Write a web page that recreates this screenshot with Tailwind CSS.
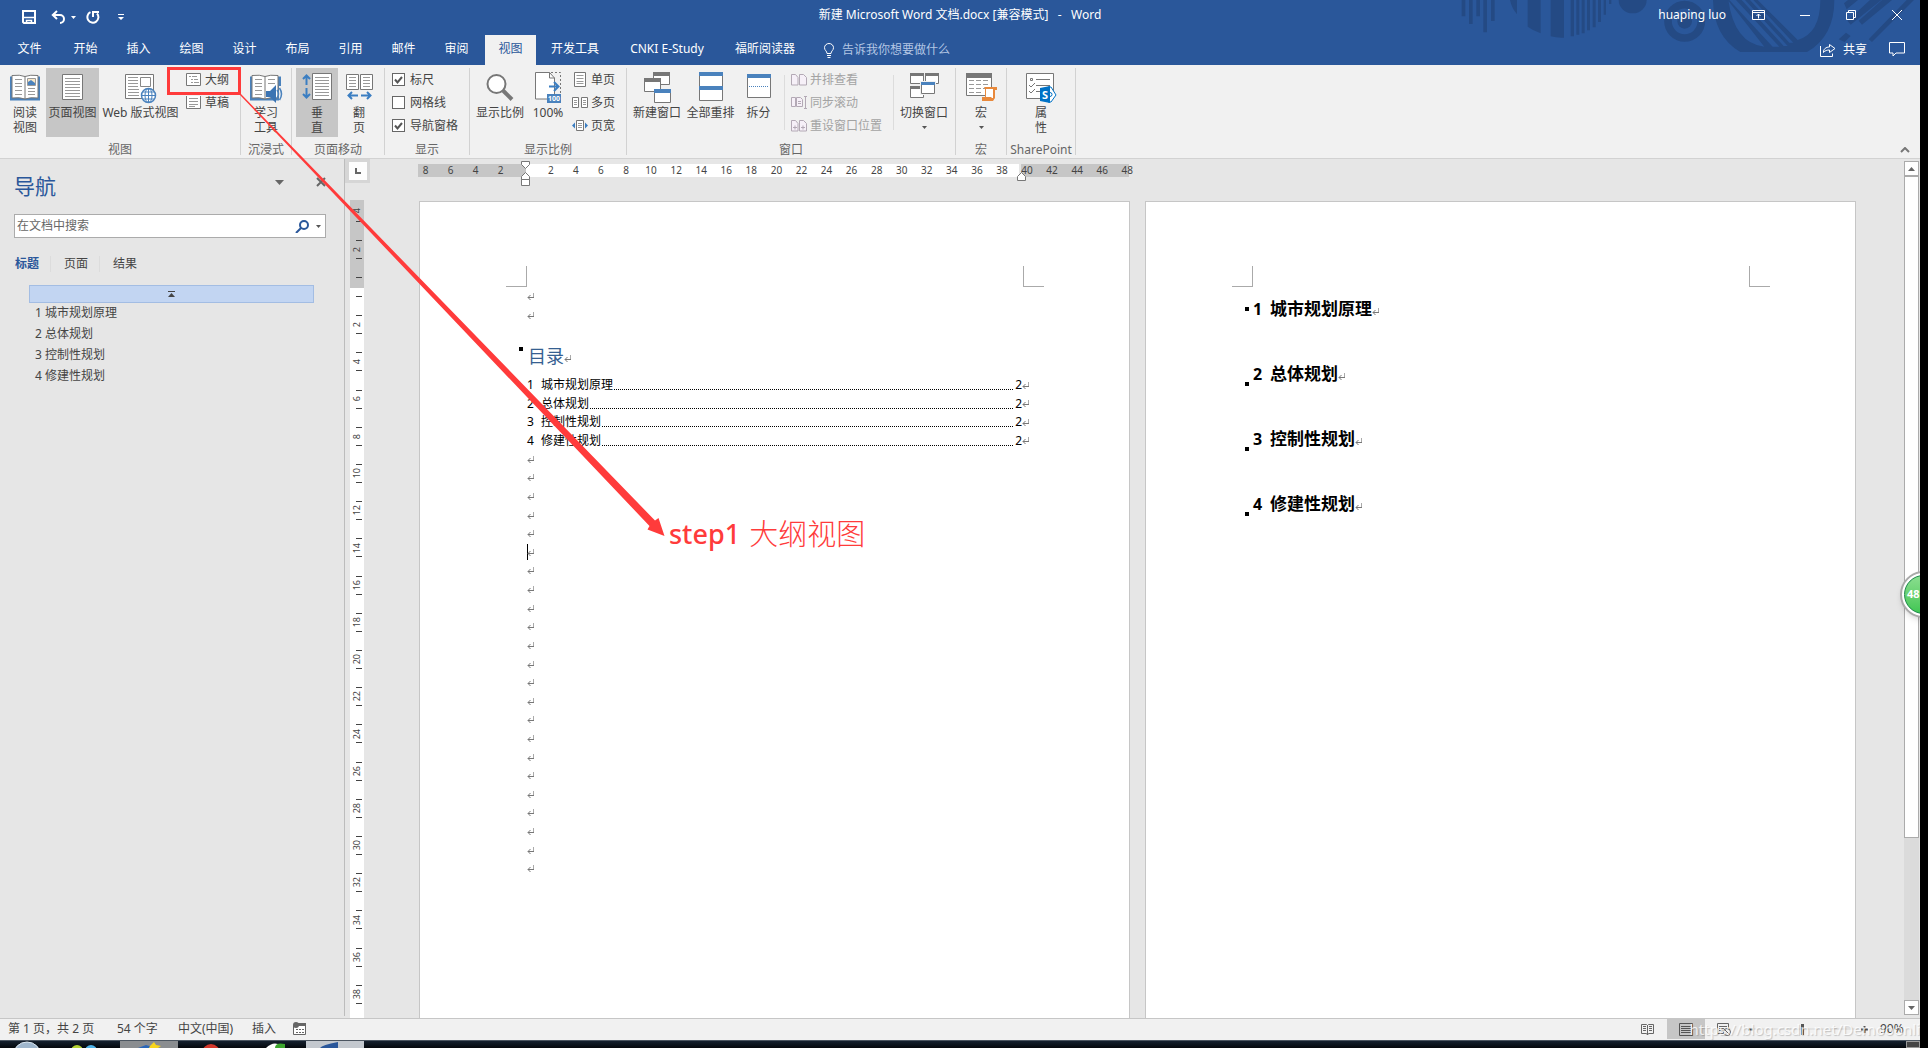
<!DOCTYPE html>
<html lang="zh-CN">
<head>
<meta charset="utf-8">
<title>新建 Microsoft Word 文档.docx - Word</title>
<script src="https://cdn.jsdelivr.net/npm/@tailwindcss/browser@4"></script>
</head>
<body class="bg-black pr-2 font-['Noto_Sans','Noto_Sans_CJK_SC',sans-serif] text-xs leading-4 text-[#444]">
<div class="relative flex h-screen flex-col overflow-hidden bg-[#e6e6e6]">

  <!-- Title bar and ribbon tabs -->
  <header class="relative h-[65px] shrink-0 overflow-hidden bg-[#2a579a] text-white">
    <svg class="absolute top-0 right-0" width="480" height="65" viewBox="0 0 1440 195" fill="#244a84">
      <path d="M65 0h11v49H65zM87 0h11v72H87zM109 0h11v49h-11zM130 0h11v97h-11zM153 0h11v63h-11zM210 0h21v43Q215 24 210 0zM263 0h39v100Q280 92 263 80zM332 0h40v113q-22 1-40-4zM392 0h10v109h-10zM409 0h9v104h-9zM425 0h9v100h-9zM441 0h9v91h-9zM458 0h9v82h-9zM474 0h9v66h-9zM491 0h7v44h-7zM507 0h7v12h-7z"/>
      <path d="M536 0h84a42 40 0 0 1-84 0z"/>
      <circle cx="734" cy="64" r="50" fill="none" stroke="#244a84" stroke-width="23"/><circle cx="734" cy="64" r="22"/>
      <path d="M819 0q2 110 82 156h200q82-46 82-156h-42q0 100-68 120L953 0h-90l110 140q-90-10-108-140z"/>
      <path d="M868 0h20l130 140h-20zM905 0h10l128 138h-12zM930 0h10l120 128h-12z" fill="#2a579a"/>
      <path d="M1212 10l12-10h30l-34 28zM1222 62L1290 0h34l-92 74zM1256 62l70-62h30l-90 74zM1286 118L1400 0h22l-126 126zM1196 118l22-20 14 10-18 18z"/>
    </svg>
    <div class="relative grid h-[30px] grid-cols-[1fr_auto_1fr] items-center">
      <div class="flex items-center pl-[22px] pt-1">
        <button aria-label="保存"><svg width="14" height="14" viewBox="0 0 14 14" fill="none" stroke="#fff" stroke-width="2"><path d="M1 1h12v12H2L1 12z"/><path d="M1 7.500h12M4.500 14v-3.500h5V14" stroke-width="1.500"/></svg></button>
        <button aria-label="撤消" class="ml-[15px]"><svg width="15" height="14" viewBox="0 0 15 14" fill="none" stroke="#fff" stroke-width="2"><path d="M1.500 5H9a4 4 0 0 1 0 8M6 1L1.800 5 6 9"/></svg></button>
        <button aria-label="撤消列表" class="ml-[5px]"><svg width="5" height="3" fill="#fff"><path d="M0 0h5L2.500 3z"/></svg></button>
        <button aria-label="重复" class="ml-[10px]"><svg width="14" height="14" viewBox="0 0 14 14" fill="none" stroke="#fff" stroke-width="2"><path d="M4.500 2.200A5.500 5.500 0 1 0 11 3.500M7 7V2h6"/></svg></button>
        <button aria-label="自定义快速访问工具栏" class="ml-[18px]"><svg width="6" height="6" fill="#fff"><path d="M0 0h6v1H0zM0 3h6L3 6z"/></svg></button>
      </div>
      <h1 class="whitespace-pre">新建 Microsoft Word 文档.docx [兼容模式]   -   Word</h1>
      <div class="flex items-center justify-end pr-[18px]">
        <a href="#" class="mr-[26px]">huaping luo</a>
        <button aria-label="功能区显示选项"><svg width="13" height="10" fill="none" stroke="#fff"><path d="M.5.5h12v9H.5zM.5 2.500h12M6.500 8.500V4M4.500 6l2-2 2 2"/></svg></button>
        <button aria-label="最小化" class="ml-[35px]"><svg width="10" height="10"><path d="M0 5.500h10" stroke="#fff"/></svg></button>
        <button aria-label="还原" class="ml-9"><svg width="10" height="10" fill="none" stroke="#fff"><path d="M.5 2.500h7v7h-7zM2.500 2.500v-2h7v7h-2"/></svg></button>
        <button aria-label="关闭" class="ml-9"><svg width="10" height="10" stroke="#fff"><path d="M0 0l10 10M10 0L0 10"/></svg></button>
      </div>
    </div>
    <nav class="relative flex h-[35px] items-end">
      <button class="h-[30px] w-[59px] pb-0.5">文件</button>
      <button class="h-[30px] w-[53px] pb-0.5">开始</button>
      <button class="h-[30px] w-[53px] pb-0.5">插入</button>
      <button class="h-[30px] w-[53px] pb-0.5">绘图</button>
      <button class="h-[30px] w-[53px] pb-0.5">设计</button>
      <button class="h-[30px] w-[53px] pb-0.5">布局</button>
      <button class="h-[30px] w-[53px] pb-0.5">引用</button>
      <button class="h-[30px] w-[53px] pb-0.5">邮件</button>
      <button class="h-[30px] w-[53px] pb-0.5">审阅</button>
      <button class="ml-0.5 h-[30px] w-[51px] bg-[#f1f1f1] pb-0.5 text-[#2a579a]">视图</button>
      <button class="h-[30px] w-[78px] pb-0.5">开发工具</button>
      <button class="h-[30px] w-[106px] pb-0.5">CNKI E-Study</button>
      <button class="h-[30px] w-[90px] pb-0.5">福昕阅读器</button>
      <button class="ml-[14px] flex h-[30px] items-center gap-2 text-[#b3c6e4]"><svg width="10" height="15" fill="none" stroke="#fff"><path d="M3 10.500C3 8 .5 7.500.5 4.700a4.500 4.200 0 0 1 9 0C9.500 7.500 7 8 7 10.500zM3 12.500h4M3.500 14.500h3"/></svg>告诉我你想要做什么</button>
      <div class="ml-auto flex h-[30px] items-center pr-[15px] pb-px">
        <button class="flex items-center gap-[7px]"><svg width="16" height="14" fill="none" stroke="#fff"><path d="M.5 3v10.500h12v-3M3.500 9c0-3 2.500-5 6-5V1.500L15 5.500 9.500 9.500V7C7 7 5 7.500 3.500 9.500z"/></svg>共享</button>
        <button aria-label="批注" class="ml-[22px]"><svg width="16" height="15" fill="none" stroke="#fff"><path d="M.5.5h15v10.500H7l-3 3V11H.5z"/></svg></button>
      </div>
    </nav>
  </header>

  <!-- Ribbon -->
  <section class="flex h-[94px] shrink-0 border-b border-[#d2d2d2] bg-[#f1f1f1] pt-[3px] text-center" aria-label="视图">
    <div class="mb-[3px] flex w-[241px] flex-col border-r border-[#d2d2d2]">
      <div class="flex h-[69px]">
        <button class="flex w-[46px] flex-col items-center pt-1.5 pl-1 leading-[15px]">
          <svg class="mb-1" width="32" height="27" viewBox="0 0 32 27"><path d="M1 2.500h30v24H1z" fill="#4a82bd"/><path d="M3 1.500q8-1 13 1 5-2 13-1v22.500q-8-1-13 1-5-2-13-1z" fill="#fff" stroke="#777"/><path d="M16 2.500V25" stroke="#777"/><path d="M6 5.500h7M6 9.500h7M6 12.500h7M6 16.500h7M6 20.500h7M19 14.500h7M19 17.500h7M19 20.500h7" stroke="#999"/><path d="M18.500 4.500h8v7h-8z" fill="#f8e7c8" stroke="#999"/><path d="M19 11V8l3-2 4 3v2z" fill="#4a82bd"/></svg>阅读<br>视图</button>
        <button class="flex w-[53px] flex-col items-center bg-[#c6c6c6] pt-1.5 leading-[15px]">
          <svg class="mb-1" width="21" height="27" viewBox="0 0 21 27"><path d="M.5.5h20v25H.5z" fill="#fff" stroke="#777"/><path d="M3 4.500h15M3 7.500h15M3 10.500h15M3 13.500h15M3 16.500h15M3 19.500h15M3 22.500h15" stroke="#999"/></svg>页面视图</button>
        <button class="flex w-[83px] flex-col items-center pt-1.5 leading-[15px] whitespace-nowrap">
          <svg class="mb-1" width="31" height="27" viewBox="0 0 31 27" overflow="visible"><path d="M.5.500h28v24H.5z" fill="#fff" stroke="#777"/><path d="M3 3.500h10M3 6.500h10M3 9.500h10M3 12.500h10M3 15.500h11M3 18.500h11M3 21.500h11" stroke="#999"/><path d="M15.500 3.500h10v9h-10z" fill="#fff" stroke="#888"/><circle cx="23.500" cy="21.500" r="7" fill="#fff" stroke="#4a82bd" stroke-width="1.500"/><path d="M16.500 21.500h14M23.500 14.500v14M18 18h11M18 25h11" stroke="#4a82bd"/><ellipse cx="23.500" cy="21.500" rx="3.500" ry="7" fill="none" stroke="#4a82bd"/></svg>Web 版式视图</button>
        <div class="flex flex-col pl-1">
          <button class="flex h-[23px] items-center gap-1"><svg width="15" height="13" fill="none"><path d="M.5.5h14v12H.5z" fill="#fff" stroke="#777"/><path d="M3 3.500h2M6 3.500h5M5 6.500h2M8 6.500h4M5 9.500h2M8 9.500h5" stroke="#999"/></svg>大纲</button>
          <button class="flex h-[23px] items-center gap-1"><svg width="15" height="13" fill="none"><path d="M.5 0v12.500h14V0" fill="#fff" stroke="#777"/><path d="M3 2.500h9M3 5.500h9M3 8.500h9M3 10.500h6" stroke="#999"/></svg>草稿</button>
        </div>
      </div>
      <p class="-mb-1 pt-[5px] text-[#666]">视图</p>
    </div>
    <div class="mb-[3px] flex w-[51px] flex-col border-r border-[#d2d2d2]">
      <button class="flex h-[69px] flex-col items-center pt-1.5 leading-[15px]">
        <svg class="mb-1" width="32" height="27" viewBox="0 0 32 27" overflow="visible"><path d="M0 2.500h31v24H0z" fill="#4a82bd"/><path d="M2 1.500q8-1 13 1 5-2 13-1v22.500q-8-1-13 1-5-2-13-1z" fill="#fff" stroke="#777"/><path d="M15 2.500V25" stroke="#777"/><path d="M5 5.500h7M5 9.500h7M5 12.500h7M5 16.500h7M5 20.500h7M18 5.500h7M18 9.500h7" stroke="#999"/><path d="M29 12h3v16h-3z" fill="#f1f1f1"/><path d="M16 17h4l6-6v18l-6-6h-4z" fill="#3b74b3"/><path d="M27 16q3 4 0 8M29.500 14q4 6 0 12" fill="none" stroke="#4a82bd" stroke-width="1.500"/></svg>学习<br>工具</button>
      <p class="-mb-1 pt-[5px] text-[#666]">沉浸式</p>
    </div>
    <div class="mb-[3px] flex w-[93px] flex-col border-r border-[#d2d2d2]">
      <div class="flex h-[69px] pl-1">
        <button class="flex w-[42px] flex-col items-center bg-[#c6c6c6] pt-[5px] leading-[15px]">
          <svg class="mb-1" width="30" height="28" viewBox="0 0 30 28"><path d="M10.500.5h19v26h-19z" fill="#fff" stroke="#777"/><path d="M13 4.500h14M13 7.500h14M13 10.500h14M13 13.500h14M13 16.500h14M13 19.500h14M13 22.500h14" stroke="#999"/><path d="M4.500 2.500V12M1 6l3.500-3.500L8 6M4.500 15v9.500M1 21l3.500 3.500L8 21" fill="none" stroke="#3b7ec2" stroke-width="2"/></svg>垂<br>直</button>
        <button class="flex w-[42px] flex-col items-center pt-[5px] leading-[15px]">
          <svg class="mb-1" width="27" height="28" viewBox="0 0 27 28"><path d="M.5 1.500h12v15H.5zM14.500 1.500h12v15h-12z" fill="#fff" stroke="#777"/><path d="M3 4.500h7M3 7.500h7M3 10.500h7M3 13.500h7M17 4.500h7M17 7.500h7M17 10.500h7M17 13.500h7" stroke="#999"/><path d="M2.500 22.500H12M6 19l-3.500 3.500L6 26M15 22.500h9.500M21 19l3.500 3.500L21 26" fill="none" stroke="#3b7ec2" stroke-width="2"/></svg>翻<br>页</button>
      </div>
      <p class="-mb-1 pt-[5px] text-[#666]">页面移动</p>
    </div>
    <div class="mb-[3px] flex w-[85px] flex-col border-r border-[#d2d2d2]">
      <div class="flex h-[69px] flex-col pl-[7px]">
        <label class="flex h-[23px] items-center gap-[5px]"><span class="grid"><input type="checkbox" checked class="col-start-1 row-start-1 size-[13px] appearance-none border border-[#666] bg-white"><svg class="col-start-1 row-start-1" width="13" height="13" fill="none" stroke="#555" stroke-width="2"><path d="M3 6.500l2.500 3L10 4"/></svg></span>标尺</label>
        <label class="flex h-[23px] items-center gap-[5px]"><input type="checkbox" class="size-[13px] appearance-none border border-[#666] bg-white">网格线</label>
        <label class="flex h-[23px] items-center gap-[5px]"><span class="grid"><input type="checkbox" checked class="col-start-1 row-start-1 size-[13px] appearance-none border border-[#666] bg-white"><svg class="col-start-1 row-start-1" width="13" height="13" fill="none" stroke="#555" stroke-width="2"><path d="M3 6.500l2.500 3L10 4"/></svg></span>导航窗格</label>
      </div>
      <p class="-mb-1 pt-[5px] text-[#666]">显示</p>
    </div>
    <div class="mb-[3px] flex w-[157px] flex-col border-r border-[#d2d2d2]">
      <div class="flex h-[69px] pl-[5px]">
        <button class="flex w-[50px] flex-col items-center pt-1.5 leading-[15px]">
          <svg class="mb-1" width="28" height="27" viewBox="0 0 28 27"><circle cx="10.500" cy="10" r="9" fill="#fff" stroke="#777" stroke-width="2"/><path d="M17 16.500l9 9" stroke="#777" stroke-width="4"/></svg>显示比例</button>
        <button class="flex w-[46px] flex-col items-center pt-1.5 leading-[15px]">
          <svg class="mb-1" width="27" height="27" viewBox="0 0 27 27" overflow="visible"><path d="M.5-1.500h14l5 5.500v21H.5z" fill="#fff" stroke="#777"/><path d="M14.500-1.500V4h5" fill="none" stroke="#777"/><path d="M16-1.500h9.500V19" fill="none" stroke="#777" stroke-dasharray="2 2"/><path d="M14 12.500h9M19 8l4.500 4.500L19 17" fill="none" stroke="#3b7ec2" stroke-width="2"/><path d="M12 20h14v9H12z" fill="#4a82bd"/><text x="13" y="27" font-size="7" font-weight="700" fill="#fff">100</text></svg>100%</button>
        <div class="flex flex-col pl-px">
          <button class="flex h-[23px] items-center gap-[3px]"><svg class="mx-0.5" width="12" height="15"><path d="M.5.5h11v14H.5z" fill="#fff" stroke="#777"/><path d="M2.500 3.500h7M2.500 6.500h7M2.500 9.500h7M2.500 11.500h7" stroke="#999"/></svg>单页</button>
          <button class="flex h-[23px] items-center gap-[3px]"><svg width="16" height="11"><path d="M.5.5h6v10h-6zM9.500.5h6v10h-6z" fill="#fff" stroke="#777"/><path d="M2 3.500h3M2 5.500h3M2 7.500h3M11 3.500h3M11 5.500h3M11 7.500h3" stroke="#999"/></svg>多页</button>
          <button class="flex h-[23px] items-center gap-[3px]"><svg width="16" height="11"><path d="M4.500.5h7v10h-7z" fill="#fff" stroke="#777"/><path d="M6 3.500h4M6 5.500h4M6 7.500h4" stroke="#999"/><path d="M3 2.500v6L0 5.500zM13 2.500v6l3-3z" fill="#3b7ec2"/></svg>页宽</button>
        </div>
      </div>
      <p class="-mb-1 pt-[5px] text-[#666]">显示比例</p>
    </div>
    <div class="mb-[3px] flex w-[329px] flex-col border-r border-[#d2d2d2]">
      <div class="flex h-[69px] pl-[3px]">
        <button class="flex w-[54px] flex-col items-center pt-1.5 leading-[15px]">
          <svg class="mb-1" width="28" height="27" viewBox="0 0 28 27" overflow="visible"><path d="M10.500-.5h16v11h-16z" fill="#fff" stroke="#777"/><path d="M10-2h17v4H10z" fill="#777"/><path d="M1.500 5.500h16v12h-16z" fill="#fff" stroke="#777"/><path d="M1 4h17v4H1z" fill="#777"/><path d="M11.500 17.500h16v11h-16z" fill="#fff" stroke="#777"/><path d="M11 15h17v4H11z" fill="#4a82bd"/></svg>新建窗口</button>
        <button class="flex w-[53px] flex-col items-center pt-1.5 leading-[15px]">
          <svg class="mb-1" width="24" height="27" viewBox="0 0 24 27" overflow="visible"><path d="M.5-.5h23v27H.5z" fill="#fff" stroke="#777"/><path d="M0-2h24v4H0zM0 12h24v4H0z" fill="#4a82bd"/></svg>全部重排</button>
        <button class="flex w-[43px] flex-col items-center pt-1.5 leading-[15px]">
          <svg class="mb-1" width="24" height="27" viewBox="0 0 24 27"><path d="M.5.500h23v23H.5z" fill="#fff" stroke="#777"/><path d="M0 0h24v4H0z" fill="#4a82bd"/><path d="M2 12.500h20" stroke="#4a82bd" stroke-dasharray="1 1"/></svg>拆分</button>
        <div class="my-[7px] ml-1 w-px bg-[#dcdcdc]"></div>
        <div class="flex flex-col pl-[6px] text-[#a3a3a3]">
          <button disabled class="flex h-[23px] items-center gap-[3px]"><svg width="16" height="12" fill="#f6f0f8" stroke="#b3a9b5"><path d="M.5.5h4l2.500 3v7.500H.5zM8.500.5h4l3 3v7.500h-7z"/></svg>并排查看</button>
          <button disabled class="flex h-[23px] items-center gap-[3px]"><svg width="16" height="15" fill="#f6f0f8" stroke="#b3a9b5"><path d="M.5 2.500h4v9h-4zM5.500 2.500h4l2 2v7h-6zM14.500 1v13M13 1.500h3M13 13.500h3M7 6.500h3M7 8.500h3"/></svg>同步滚动</button>
          <button disabled class="flex h-[23px] items-center gap-[3px]"><svg width="16" height="12" fill="#f6f0f8" stroke="#b3a9b5"><path d="M.5.5h4l2.500 3v7.500H.5zM8.500.5h4l3 3v7.500h-7zM2 7.500h4M4 5.500v4M10 7.500h4M12 5.500v4"/></svg>重设窗口位置</button>
        </div>
        <div class="my-[7px] ml-[11px] w-px bg-[#dcdcdc]"></div>
        <button class="ml-[3px] flex w-[54px] flex-col items-center pt-1.5 leading-[15px]">
          <svg class="mb-1" width="29" height="27" viewBox="0 0 29 27" overflow="visible"><path d="M.5-.5h13v10H.5zM15.500-.5h13v10h-13zM.5 12.500h13v11H.5z" fill="#fff" stroke="#777"/><path d="M0-1h14v3H0zM15-1h14v3H15zM0 12h14v3H0z" fill="#777"/><path d="M10 7h16v14H10z" fill="#f1f1f1"/><path d="M11.500 8.500h13v11h-13z" fill="#fff" stroke="#777"/><path d="M11 8h14v3H11z" fill="#4a82bd"/></svg>切换窗口
          <svg class="mt-1.5" width="5" height="3" fill="#555"><path d="M0 0h5L2.500 3z"/></svg></button>
      </div>
      <p class="-mb-1 pt-[5px] text-[#666]">窗口</p>
    </div>
    <div class="mb-[3px] flex w-[51px] flex-col border-r border-[#d2d2d2]">
      <button class="flex h-[69px] flex-col items-center pt-1.5 leading-[15px]">
        <svg class="mb-1" width="31" height="27" viewBox="0 0 31 27" overflow="visible"><path d="M.5-.5h25v22H.5z" fill="#fff" stroke="#777"/><path d="M0-1h26v5H0z" fill="#777"/><path d="M3 6.500h20M3 10.500h20M3 14.500h20M3 18.500h14" stroke="#999" stroke-dasharray="5 2"/><path d="M18 13h13v3h-2v8l-2 3H16v-4h3V15z" fill="#e8893c"/><path d="M20 15h7v9h-1l-1-1h-5z" fill="#fff"/></svg>宏
        <svg class="mt-1.5" width="5" height="3" fill="#555"><path d="M0 0h5L2.500 3z"/></svg></button>
      <p class="-mb-1 pt-[5px] text-[#666]">宏</p>
    </div>
    <div class="mb-[3px] flex w-[69px] flex-col border-r border-[#d2d2d2]">
      <button class="flex h-[69px] flex-col items-center pt-1.5 leading-[15px]">
        <svg class="mb-1" width="30" height="27" viewBox="0 0 30 27" overflow="visible"><path d="M.5-.5h27v25H.5z" fill="#fff" stroke="#777"/><path d="M4.500 4.500h2v2h-2zM10 5.500h14M10 11.500h14M10 17.500h5M3 11l2 2 4-4M3 17l2 2 4-4" fill="none" stroke="#777"/><path d="M22 13h3l5 8-5 7h-3z" fill="#fff" stroke="#0072c6"/><circle cx="24" cy="20.500" r="2" fill="none" stroke="#0072c6"/><path d="M14 14l10-2v17l-10-2z" fill="#0072c6"/><text x="16" y="25" font-size="11" font-weight="700" fill="#fff">S</text></svg>属<br>性</button>
      <p class="-mb-1 pt-[5px] text-[#666]">SharePoint</p>
    </div>
    <button aria-label="折叠功能区" class="mr-[10px] mb-[5px] ml-auto self-end"><svg width="10" height="6" fill="none" stroke="#777" stroke-width="2"><path d="M1 5l4-4 4 4"/></svg></button>
  </section>

  <main class="flex min-h-0 flex-1">
    <!-- Navigation pane -->
    <aside class="mb-0.5 flex w-[345px] shrink-0 flex-col border-r border-[#bcbcbc]">
      <div class="flex items-center pt-[14px] pl-[14px]">
        <h2 class="text-[21px] leading-[26px] text-[#2a579a]">导航</h2>
        <button aria-label="任务窗格选项" class="mb-2 ml-auto"><svg width="9" height="5" fill="#666"><path d="M0 0h9L4.500 5z"/></svg></button>
        <button aria-label="关闭窗格" class="mr-[18px] mb-2 ml-8"><svg width="10" height="10" stroke="#666" stroke-width="2"><path d="M1 1l8 8M9 1L1 9"/></svg></button>
      </div>
      <form class="mt-[15px] mr-[18px] ml-[14px] flex h-6 items-center border border-[#ababab] bg-white">
        <input type="text" aria-label="在文档中搜索" placeholder="在文档中搜索" class="min-w-0 flex-1 pl-0.5 text-xs placeholder:text-[#666] outline-none">
        <button type="button" aria-label="搜索"><svg width="15" height="13" fill="none" stroke="#2a579a" stroke-width="2"><circle cx="9" cy="5" r="4"/><path d="M6 8l-5 5"/></svg></button>
        <button type="button" aria-label="搜索选项" class="mr-1 ml-[6px]"><svg width="5" height="3" fill="#555"><path d="M0 0h5L2.500 3z"/></svg></button>
      </form>
      <div class="mt-4 flex h-5 items-center pl-[15px]">
        <button class="pr-[11px] font-bold text-[#2a579a]">标题</button>
        <button class="border-l border-[#dcdcdc] pr-[11px] pl-[13px]">页面</button>
        <button class="border-l border-[#dcdcdc] pl-[13px]">结果</button>
      </div>
      <button aria-label="跳至开头" class="mt-[11px] mr-[30px] ml-[29px] flex h-[18px] items-center justify-center border border-[#a3bde3] bg-[#c2d5f2]"><svg width="7" height="6" fill="#444"><path d="M0 0h7v1H0zM3.500 2L7 6H0z"/></svg></button>
      <ul class="-mt-px pl-[35px] leading-[21px]">
        <li><a href="#">1 城市规划原理</a></li>
        <li><a href="#">2 总体规划</a></li>
        <li><a href="#">3 控制性规划</a></li>
        <li><a href="#">4 修建性规划</a></li>
      </ul>
    </aside>

    <!-- Vertical ruler -->
    <div class="flex w-[25px] shrink-0 flex-col text-[9px]">
      <button aria-label="制表符" class="flex h-6 shrink-0 items-center bg-[#d6d6d6] pl-1"><span class="flex size-[18px] items-center justify-center bg-[#fdfdfd]"><svg width="6" height="6" fill="none" stroke="#666" stroke-width="2"><path d="M1 0v5h5"/></svg></span></button>
      <div class="mt-[17px] ml-[5px] flex min-h-0 w-[14px] flex-1 flex-col overflow-hidden bg-white">
        <div class="flex h-[88px] shrink-0 flex-col justify-end bg-[#c6c6c6]" id="vtop"></div>
        <div class="flex h-[18px] shrink-0 flex-col"><span class="mt-2 mr-0.5 h-px w-[6px] self-end bg-[#444]"></span></div>
        <div class="flex h-[707px] shrink-0 flex-col" id="vmain"></div>
      </div>
    </div>

    <!-- Document -->
    <div class="flex min-w-0 flex-1 flex-col pl-12">
      <div class="relative mt-[5px] flex h-[13px] w-[711px] shrink-0 text-[10px] leading-[13px]">
        <div class="w-[108px] bg-[#c6c6c6]"></div><div class="w-[493px] bg-white"></div><div class="ml-0.5 flex-1 bg-[#c6c6c6]"></div>
        <div class="absolute inset-y-0 -left-[5px] flex w-[727px]" id="hruler"></div>
        <svg class="absolute -top-[3px] left-[103px]" width="10" height="25" fill="#fff" stroke="#777"><path d="M.5.500h8v3l-4 4-4-4zM4.500 11.500l4 4v3h-8v-3zM.5 18.500h8v6h-8z"/></svg>
        <svg class="absolute top-2 left-[599px]" width="10" height="9" fill="#fff" stroke="#777"><path d="M4.500.500l4 4v4h-8v-4z"/></svg>
      </div>
      <div class="mt-6 flex min-h-0 flex-1 gap-[15px] overflow-hidden pl-px">
        <article class="flex w-[711px] shrink-0 flex-col border border-b-0 border-[#c6c6c6] bg-white text-black">
          <div class="flex h-[85px] shrink-0 items-end justify-between pr-[85px] pl-[86px]"><span class="size-[21px] border-r border-b border-[#aaa]"></span><span class="size-[21px] border-b border-l border-[#aaa]"></span></div>
          <div class="flex h-[38px] shrink-0 flex-col pl-[107px]" id="marks0"></div>
          <h2 class="mt-[18px] flex h-[26px] shrink-0 items-center pl-[99px] text-lg text-[#365f91]"><span class="mr-[5px] mb-[14px] size-1 bg-black"></span>目录<svg class="mt-1" width="7" height="7"><use href="#pm"/></svg></h2>
          <ol class="mt-[7px] flex h-[74px] shrink-0 flex-col pr-[100px] pl-[107px]" id="toc"></ol>
          <div class="flex h-[428px] shrink-0 flex-col pl-[107px]" id="marks1"></div>
        </article>
        <article class="flex w-[711px] shrink-0 flex-col border border-b-0 border-[#c6c6c6] bg-white text-black">
          <div class="flex h-[85px] shrink-0 items-end justify-between pr-[85px] pl-[86px]"><span class="size-[21px] border-r border-b border-[#aaa]"></span><span class="size-[21px] border-b border-l border-[#aaa]"></span></div>
          <div class="flex flex-col gap-[41px] pt-[10px] pl-[99px]" id="heads"></div>
        </article>
      </div>
    </div>

    <!-- Scroll bar -->
    <div class="mt-0.5 mr-px mb-[3px] flex w-[15px] shrink-0 flex-col bg-[#dbdbdb]">
      <button aria-label="向上滚动" class="flex h-[15px] items-center justify-center border border-[#ababab] bg-white"><svg width="7" height="4" fill="#666"><path d="M0 4h7L3.500 0z"/></svg></button>
      <div class="h-[662px] border border-[#ababab] bg-white"></div>
      <button aria-label="向下滚动" class="mt-auto flex h-[15px] items-center justify-center border border-[#ababab] bg-white"><svg width="7" height="4" fill="#666"><path d="M0 0h7L3.500 4z"/></svg></button>
    </div>
  </main>

  <!-- Status bar -->
  <footer class="relative flex h-[22px] shrink-0 items-center border-t border-[#c6c6c6] bg-[#f1f1f1] pl-2">
    <div class="flex items-center pb-0.5">
      <button class="w-[109px] text-left">第 1 页，共 2 页</button>
      <button class="w-[61px] text-left">54 个字</button>
      <button class="w-[74px] text-left">中文(中国)</button>
      <button class="w-[41px] text-left">插入</button>
      <button aria-label="宏录制"><svg width="13" height="13"><path d="M.5 3.500h12v9H.5z" fill="#fff" stroke="#666"/><path d="M5 1h8v3H5z" fill="#666"/><circle cx="3" cy="3" r="3" fill="#666"/><path d="M3 7.500h8M3 10.500h8" stroke="#666" stroke-dasharray="2 1"/></svg></button>
    </div>
    <div class="ml-auto flex h-full items-center pb-px">
      <button aria-label="阅读视图"><svg width="13" height="13" fill="none" stroke="#666"><path d="M.5 1.500h5l1 1 1-1h5v9h-5l-1 1.500-1-1.500h-5zM6.500 2v10M2 3.500h3M2 5.500h3M2 7.500h3M8 3.500h3M8 5.500h3M8 7.500h3"/></svg></button>
      <button aria-label="页面视图" class="ml-[13px] flex h-full w-[38px] items-center justify-center bg-[#c6c6c6]"><svg width="14" height="13" fill="none" stroke="#555"><path d="M.5.500h13v12H.5zM2 3.500h10M2 5.500h10M2 7.500h10M2 9.500h10"/></svg></button>
      <button aria-label="Web 版式视图" class="ml-3"><svg width="14" height="13" fill="none" stroke="#666"><path d="M7 10.500H.5V.500h11V6M2 3.500h8M2 5.500h5M2 7.500h4"/><circle cx="10" cy="9" r="3.500"/><path d="M7.500 6.500l5 5"/></svg></button>
      <button aria-label="缩小" class="ml-[17px]"><svg width="5" height="3"><path d="M0 1.500h5" stroke="#555" stroke-width="2"/></svg></button>
      <input type="range" aria-label="显示比例" min="0" max="100" value="46" class="ml-px h-3 w-[105px] appearance-none bg-linear-to-b from-transparent from-45% via-[#999] via-50% to-transparent to-55% [&::-webkit-slider-thumb]:h-[11px] [&::-webkit-slider-thumb]:w-[3px] [&::-webkit-slider-thumb]:appearance-none [&::-webkit-slider-thumb]:bg-[#555]">
      <button aria-label="放大" class="ml-0.5"><svg width="7" height="7" stroke="#555" stroke-width="2"><path d="M0 3.500h7M3.500 0v7"/></svg></button>
      <button class="ml-3 w-10 text-left">90%</button>
    </div>
    <span class="pointer-events-none absolute top-0 right-0 text-[15px] leading-5 whitespace-nowrap text-white/80 [text-shadow:1px_1px_1px_#0003]">https://blog.csdn.net/Demooonli</span>
  </footer>

  <!-- Desktop task bar -->
  <div class="relative flex h-[8px] shrink-0 overflow-hidden border-t border-[#4b5560] bg-linear-to-b from-[#14202e] to-[#05080c]">
    <svg width="364" height="7" viewBox="0 0 364 7"><circle cx="27" cy="15" r="14" fill="#9fb6cc" stroke="#dce8f2"/><circle cx="77" cy="10" r="6" fill="#b5d334"/><circle cx="91" cy="10" r="6" fill="#4fb4ea"/><path d="M120 0h58v7h-58z" fill="#8a8d90"/><path d="M138 7l8-3 10 3z" fill="#2a66b8"/><path d="M154 1l2 3 5 1-3 2h-9l1-2z" fill="#f7d51d"/><circle cx="211" cy="12" r="9" fill="#d4382c"/><path d="M266 7q6-6 12-4v4z" fill="#fff"/><path d="M275 7q0-6 10-4v4z" fill="#3da52e"/><path d="M306 0h58v7h-58z" fill="#c3c8ce"/><path d="M320 7q2-3 18-6v6z" fill="#2a579a"/></svg>
    <span class="ml-auto w-[14px] border border-[#999] bg-[#444]"></span>
  </div>

  <!-- Floating speed badge -->
  <div class="absolute top-[571px] -right-[27px] flex size-[47px] items-center rounded-full border-2 border-[#aaa] bg-white p-0.5 shadow-md"><span class="flex size-full items-center rounded-full border border-[#1c8a4a] bg-linear-to-b from-[#8ade8f] to-[#3fc653] pb-0.5 pl-0.5 text-[11px] font-bold text-white">48</span></div>

  <!-- Tutorial annotation -->
  <div class="pointer-events-none absolute top-[67px] left-[167px] h-7 w-[74px] border-3 border-[#ff3b3b]"></div>
  <svg class="pointer-events-none absolute top-0 left-0" width="670" height="540" fill="#ff3b3b"><path d="M239.500 94.500L649.500 526l-2 3.500L664.500 536l-6-18-3.500 2.500L241 94z"/></svg>
  <p class="pointer-events-none absolute top-[516px] left-[669px] flex items-center gap-[9px] whitespace-nowrap text-[#ff3b3b]"><span class="text-[27px] leading-9 font-medium">step1</span><span class="text-[29px] leading-9 font-light">大纲视图</span></p>
</div>

<svg class="absolute size-0"><symbol id="pm" viewBox="0 0 7 7"><path d="M6.500 0v4.500" stroke="#aaa"/><path d="M7 4.500H1M3.500 2L1 4.500 3.500 7" fill="none" stroke="#777"/></symbol></svg>

<script>
  const fill = (id, items) => { document.getElementById(id).innerHTML = items.join(''); };
  const mark = '<svg class="shrink-0" width="7" height="7"><use href="#pm"/></svg>';
  const digits = n => `<span class="col-start-1 row-start-1 w-[14px] rotate-180 text-center leading-[14px] [writing-mode:vertical-rl]">${n}</span>`;
  const cell = n => `<div class="grid min-h-0 flex-1 grid-cols-[14px] content-center items-center">${digits(n)}<span class="col-start-1 row-start-1 mr-0.5 h-[19px] w-[6px] justify-self-end border-y border-[#444]"></span></div>`;
  const evens = (a, b) => Array.from({ length: (b - a) / 2 + 1 }, (_, i) => a + i * 2);
  fill('vmain', evens(2, 38).map(cell));
  fill('vtop', [
    `<div class="mb-[9px] grid h-[22px] shrink-0 grid-cols-[14px] grid-rows-[22px] items-center">${digits(4)}<span class="col-start-1 row-start-1 mr-0.5 h-full w-[6px] justify-self-end border-b border-[#444]"></span></div>`,
    `<div class="flex h-[37px] shrink-0 flex-col">${cell(2)}</div>`,
    '<div class="flex h-5 shrink-0 flex-col"><span class="mt-[9px] mr-0.5 h-px w-[6px] self-end bg-[#444]"></span></div>'
  ]);
  fill('hruler', [8, 6, 4, 2, '', ...evens(2, 48)].map(n => `<span class="flex-1 text-center">${n}</span>`));
  fill('marks0', [0, 1].map(() => `<p class="flex flex-1 items-center">${mark}</p>`));
  fill('marks1', Array.from({ length: 23 }, (_, i) => `<p class="flex min-h-0 flex-1 items-center">${i === 5 ? '<span class="-mr-px h-4 w-px bg-black"></span>' : ''}${mark}</p>`));
  const titles = ['城市规划原理', '总体规划', '控制性规划', '修建性规划'];
  fill('toc', titles.map((t, i) => `<li class="flex min-h-0 flex-1 items-center"><span class="w-[14px]">${i + 1}</span><span>${t}</span><span class="mx-px mt-[9px] flex-1 border-b border-dotted border-black"></span><span class="pl-px">2</span>${mark}</li>`));
  fill('heads', titles.map((t, i) => `<h3 class="flex h-6 items-center text-[17px] font-bold"><span class="${i ? 'mt-5 mr-1 size-1 bg-black' : 'mr-1 size-1 bg-black'}"></span><span class="w-[17px] text-base">${i + 1}</span>${t}<span class="mt-1">${mark}</span></h3>`));
</script>
</body>
</html>
